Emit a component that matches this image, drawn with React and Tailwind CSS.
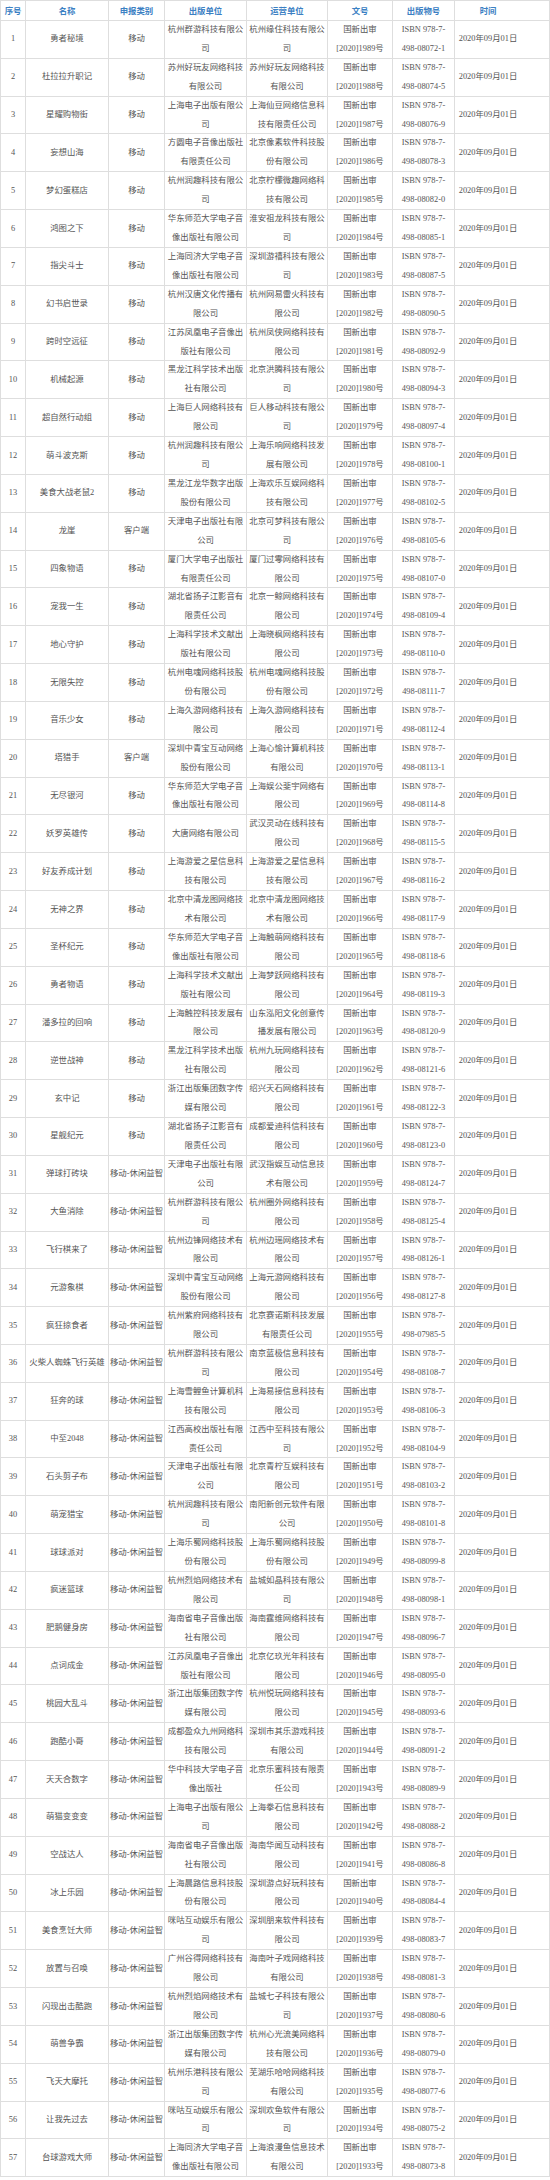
import React from "react";

const raw = `勇者秘境|移动|杭州群游科技有限公司|杭州缘住科技有限公司|1989|08072-1
杜拉拉升职记|移动|苏州好玩友网络科技有限公司|苏州好玩友网络科技有限公司|1988|08074-5
星耀购物街|移动|上海电子出版有限公司|上海仙豆网络信息科技有限责任公司|1987|08076-9
妄想山海|移动|方圆电子音像出版社有限责任公司|北京像素软件科技股份有限公司|1986|08078-3
梦幻蛋糕店|移动|杭州润趣科技有限公司|北京柠檬微趣网络科技有限公司|1985|08082-0
鸿图之下|移动|华东师范大学电子音像出版社有限公司|淮安祖龙科技有限公司|1984|08085-1
指尖斗士|移动|上海同济大学电子音像出版社有限公司|深圳游禧科技有限公司|1983|08087-5
幻书启世录|移动|杭州汉唐文化传播有限公司|杭州网易雷火科技有限公司|1982|08090-5
跨时空远征|移动|江苏凤凰电子音像出版社有限公司|杭州凤侠网络科技有限公司|1981|08092-9
机械起源|移动|黑龙江科学技术出版社有限公司|北京洪腾科技有限公司|1980|08094-3
超自然行动组|移动|上海巨人网络科技有限公司|巨人移动科技有限公司|1979|08097-4
萌斗波克斯|移动|杭州润趣科技有限公司|上海乐响网络科技发展有限公司|1978|08100-1
美食大战老鼠2|移动|黑龙江龙华数字出版股份有限公司|上海欢乐互娱网络科技有限公司|1977|08102-5
龙崖|客户端|天津电子出版社有限公司|北京可梦科技有限公司|1976|08105-6
四象物语|移动|厦门大学电子出版社有限责任公司|厦门过零网络科技有限公司|1975|08107-0
宠我一生|移动|湖北省扬子江影音有限责任公司|北京一鲸网络科技有限公司|1974|08109-4
地心守护|移动|上海科学技术文献出版社有限公司|上海晓枫网络科技有限公司|1973|08110-0
无限失控|移动|杭州电魂网络科技股份有限公司|杭州电魂网络科技股份有限公司|1972|08111-7
音乐少女|移动|上海久游网络科技有限公司|上海久游网络科技有限公司|1971|08112-4
塔猎手|客户端|深圳中青宝互动网络股份有限公司|上海心愉计算机科技有限公司|1970|08113-1
无尽银河|移动|华东师范大学电子音像出版社有限公司|上海娱公斐宇网络有限公司|1969|08114-8
妖罗英雄传|移动|大唐网络有限公司|武汉灵动在线科技有限公司|1968|08115-5
好友养成计划|移动|上海游爱之星信息科技有限公司|上海游爱之星信息科技有限公司|1967|08116-2
无神之界|移动|北京中清龙图网络技术有限公司|北京中清龙图网络技术有限公司|1966|08117-9
圣杯纪元|移动|华东师范大学电子音像出版社有限公司|上海触萌网络科技有限公司|1965|08118-6
勇者物语|移动|上海科学技术文献出版社有限公司|上海梦跃网络科技有限公司|1964|08119-3
潘多拉的回响|移动|上海触控科技发展有限公司|山东泓阳文化创意传播发展有限公司|1963|08120-9
逆世战神|移动|黑龙江科学技术出版社有限公司|杭州九玩网络科技有限公司|1962|08121-6
玄中记|移动|浙江出版集团数字传媒有限公司|绍兴天石网络科技有限公司|1961|08122-3
星舰纪元|移动|湖北省扬子江影音有限责任公司|成都爱迪科信科技有限公司|1960|08123-0
弹球打砖块|移动-休闲益智|天津电子出版社有限公司|武汉指娱互动信息技术有限公司|1959|08124-7
大鱼消除|移动-休闲益智|杭州群游科技有限公司|杭州圈外网络科技有限公司|1958|08125-4
飞行棋来了|移动-休闲益智|杭州边锋网络技术有限公司|杭州边瑶网络技术有限公司|1957|08126-1
元游象棋|移动-休闲益智|深圳中青宝互动网络股份有限公司|上海元游网络科技有限公司|1956|08127-8
疯狂掠食者|移动-休闲益智|杭州紫府网络科技有限公司|北京赛诺斯科技发展有限责任公司|1955|07985-5
火柴人蜘蛛飞行英雄|移动-休闲益智|杭州群游科技有限公司|南京蓝极信息科技有限公司|1954|08108-7
狂奔的球|移动-休闲益智|上海雪鲤鱼计算机科技有限公司|上海易接信息科技有限公司|1953|08106-3
中至2048|移动-休闲益智|江西高校出版社有限责任公司|江西中至科技有限公司|1952|08104-9
石头剪子布|移动-休闲益智|天津电子出版社有限公司|北京青柠互娱科技有限公司|1951|08103-2
萌宠猎宝|移动-休闲益智|杭州润趣科技有限公司|南阳新创元软件有限公司|1950|08101-8
球球派对|移动-休闲益智|上海乐蜀网络科技股份有限公司|上海乐蜀网络科技股份有限公司|1949|08099-8
疯迷篮球|移动-休闲益智|杭州烈焰网络技术有限公司|盐城如晶科技有限公司|1948|08098-1
肥鹅健身房|移动-休闲益智|海南省电子音像出版社有限公司|海南霆维网络科技有限公司|1947|08096-7
点词成金|移动-休闲益智|江苏凤凰电子音像出版社有限公司|北京亿玖光年科技有限公司|1946|08095-0
桃园大乱斗|移动-休闲益智|浙江出版集团数字传媒有限公司|杭州悦玩网络科技有限公司|1945|08093-6
跑酷小哥|移动-休闲益智|成都盈众九州网络科技有限公司|深圳市其乐游戏科技有限公司|1944|08091-2
天天合数字|移动-休闲益智|华中科技大学电子音像出版社|北京乐蜜科技有限责任公司|1943|08089-9
萌猫变变变|移动-休闲益智|上海电子出版有限公司|上海拳石信息科技有限公司|1942|08088-2
空战达人|移动-休闲益智|海南省电子音像出版社有限公司|海南华闻互动科技有限公司|1941|08086-8
冰上乐园|移动-休闲益智|上海晨路信息科技股份有限公司|深圳游点好玩科技有限公司|1940|08084-4
美食烹饪大师|移动-休闲益智|咪咕互动娱乐有限公司|深圳朋来软件科技有限公司|1939|08083-7
放置与召唤|移动-休闲益智|广州谷得网络科技有限公司|海南叶子戏网络科技有限公司|1938|08081-3
闪现出击酷跑|移动-休闲益智|杭州烈焰网络技术有限公司|盐城七子科技有限公司|1937|08080-6
萌兽争霸|移动-休闲益智|浙江出版集团数字传媒有限公司|杭州心光流美网络科技有限公司|1936|08079-0
飞天大摩托|移动-休闲益智|杭州乐港科技有限公司|芜湖乐哈哈网络科技有限公司|1935|08077-6
让我先过去|移动-休闲益智|咪咕互动娱乐有限公司|深圳欢鱼软件有限公司|1934|08075-2
台球游戏大师|移动-休闲益智|上海同济大学电子音像出版社有限公司|上海浪漫鱼信息技术有限公司|1933|08073-8`;

const rows = raw.split("\n").map((l, i) => {
  const [name, cat, pub, op, num, isbn] = l.split("|");
  return { id: i + 1, name, cat, pub, op, num, isbn };
});

const split9 = (s) => {
  const chars = Array.from(s);
  if (chars.length <= 9) return [s];
  return [chars.slice(0, 9).join(""), chars.slice(9).join("")];
};

const grid = "grid grid-cols-[25px_83px_56px_82px_81px_65px_62px_1fr]";
const cell =
  "flex items-center justify-center text-center border-r border-[#dedede]";

const headers = ["序号", "名称", "申报类别", "出版单位", "运营单位", "文号", "出版物号", "时间"];

function Lines({ text }) {
  return (
    <div className="flex flex-col items-center">
      {split9(text).map((t, i) => (
        <span key={i} className="whitespace-nowrap">
          {t}
        </span>
      ))}
    </div>
  );
}

export default function App() {
  return (
    <div
      className="w-[550px] bg-white text-[8.4px] leading-[18.9px] text-[#555]"
      style={{ fontFamily: '"Liberation Serif", "Noto Sans CJK SC", serif' }}
    >
      <div className="border-l border-t border-[#dedede]">
        <div className={`${grid} h-[20px] border-b border-[#dedede]`}>
          {headers.map((h, i) => (
            <div
              key={h}
              className={`${cell} whitespace-nowrap font-bold text-[#3b80c3] ${i === 7 ? "pr-[28px]" : ""}`}
              style={{ fontFamily: '"Noto Sans CJK SC", sans-serif' }}
            >
              {h}
            </div>
          ))}
        </div>
        {rows.map((r) => (
          <div key={r.id} className={`${grid} h-[37.84px] border-b border-[#dedede]`}>
            <div className={cell}>{r.id}</div>
            <div className={`${cell} whitespace-nowrap`}>{r.name}</div>
            <div className={`${cell} whitespace-nowrap`}>{r.cat}</div>
            <div className={cell}>
              <Lines text={r.pub} />
            </div>
            <div className={cell}>
              <Lines text={r.op} />
            </div>
            <div className={`${cell} flex-col whitespace-nowrap`}>
              <span>国新出审</span>
              <span>[2020]{r.num}号</span>
            </div>
            <div className={`${cell} flex-col whitespace-nowrap`}>
              <span>ISBN 978-7-</span>
              <span>498-{r.isbn}</span>
            </div>
            <div className={`${cell} pr-[28px] whitespace-nowrap`}>2020年09月01日</div>
          </div>
        ))}
      </div>
    </div>
  );
}
